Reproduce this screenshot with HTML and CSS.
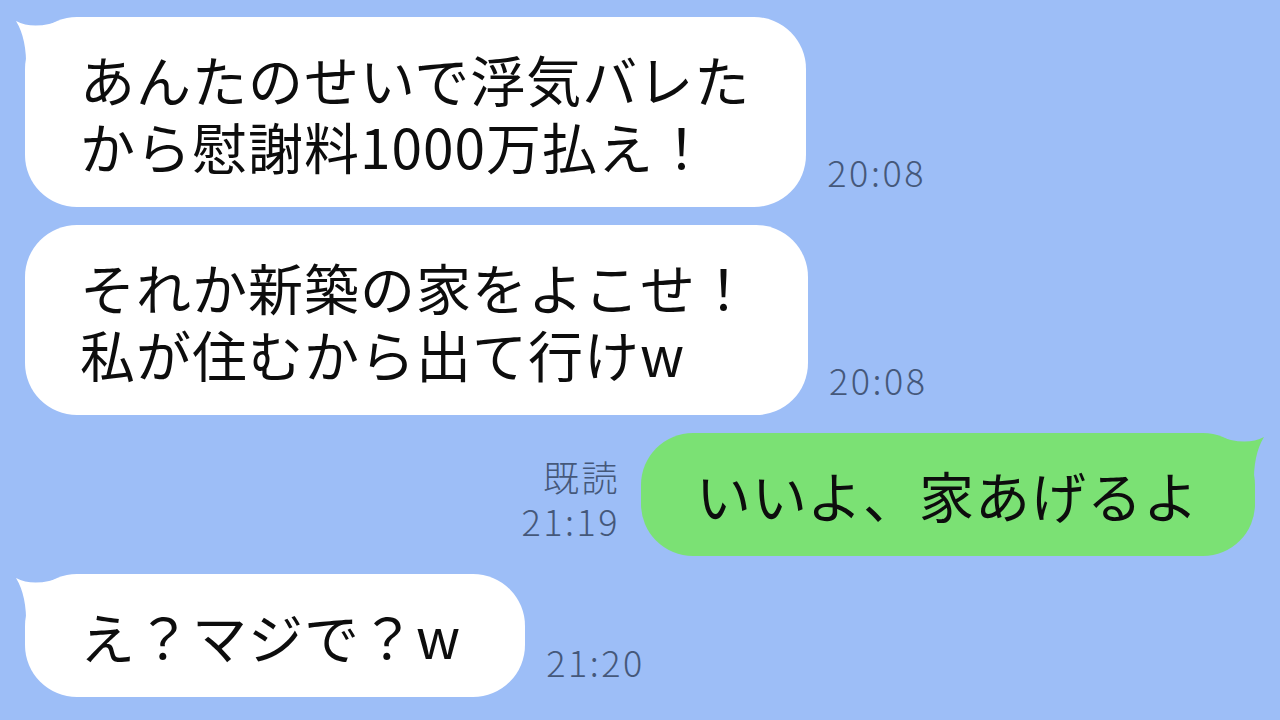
FILE: index.html
```html
<!DOCTYPE html>
<html lang="ja">
<head>
	<meta charset="UTF-8">
	<title>トーク</title>
	<link rel="stylesheet" href="styles.css">
</head>
<body>
	<div class="chat">
		<!-- 相手 -->
		<div class="row left">
			<div class="bubble white">
				<svg class="tail" width="60" height="60" viewBox="0 0 60 60"><path d="M3 4 Q22 14 52 2 L52 52 L13 52 Q14 22 3 4 Z"/></svg>
				<p>あんたのせいで浮気バレた<br>から慰謝料1000万払え！</p>
			</div>
			<div class="meta"><span>20:08</span></div>
		</div>

		<div class="row left">
			<div class="bubble white">
				<p>それか新築の家をよこせ！<br>私が住むから出て行けw</p>
			</div>
			<div class="meta"><span>20:08</span></div>
		</div>

		<!-- 自分 -->
		<div class="row right">
			<div class="meta"><span>既読</span><span>21:19</span></div>
			<div class="bubble green">
				<svg class="tail" width="60" height="60" viewBox="0 0 60 60"><path d="M57 4 Q38 14 8 2 L8 52 L47 52 Q46 22 57 4 Z"/></svg>
				<p>いいよ、家あげるよ</p>
			</div>
		</div>

		<div class="row left">
			<div class="bubble white short">
				<svg class="tail" width="60" height="60" viewBox="0 0 60 60"><path d="M3 4 Q22 14 52 2 L52 52 L13 52 Q14 22 3 4 Z"/></svg>
				<p>え？マジで？w</p>
			</div>
			<div class="meta"><span>21:20</span></div>
		</div>
	</div>
</body>
</html>
```

FILE: styles.css
```css
body {
	margin: 0;
	padding: 0;
	background-color: #9dbef7;
	font-family: "Noto Sans CJK JP", "Noto Sans", sans-serif;
	width: 1280px;
	height: 720px;
	overflow: hidden;
}
.chat {
	display: flex;
	flex-direction: column;
	gap: 18px;
	padding: 17px 25px 0;
}
.row {
	display: flex;
	align-items: flex-end;
	gap: 21px;
}
.row.right {
	justify-content: flex-end;
}
.bubble {
	position: relative;
	border-radius: 52px;
	padding: 28px 56px 28px 55px;
}
.bubble.short {
	padding-right: 64px;
}
.bubble p {
	margin: 0;
	font-size: 55px;
	line-height: 67px;
	letter-spacing: 1px;
	color: #0d0d0d;
	position: relative;
	white-space: nowrap;
}
.bubble.white {
	background-color: #fff;
}
.bubble.green {
	background-color: #7be174;
}
.tail {
	position: absolute;
	top: 0;
}
.white .tail {
	left: -12px;
	fill: #fff;
}
.green .tail {
	right: -12px;
	fill: #7be174;
}
.meta {
	display: flex;
	flex-direction: column;
	align-items: flex-end;
	color: #45587a;
	font-size: 36px;
	font-weight: 300;
	line-height: 44px;
	letter-spacing: 2.5px;
	padding-bottom: 14px;
}
```
